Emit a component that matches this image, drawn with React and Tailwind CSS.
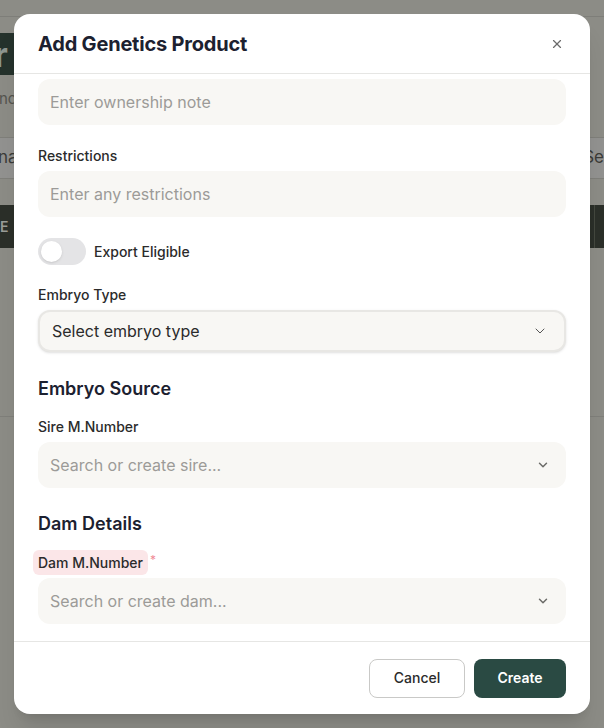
import { ChevronDown, X } from 'lucide-react';

const font = { fontFamily: 'Inter, "Noto Sans", sans-serif' };

const Label = ({ children }) => (
  <div className="mb-[5px] text-sm font-medium leading-5 text-[#2b2b2b]">{children}</div>
);

const TextInput = ({ placeholder }) => (
  <input
    type="text"
    placeholder={placeholder}
    className="h-[46px] w-full rounded-xl bg-[#f8f7f4] px-3 text-base text-[#2b2b2b] outline-none placeholder:text-[#9c9b98]"
  />
);

const Combo = ({ placeholder }) => (
  <div className="flex h-[46px] w-full items-center justify-between rounded-xl bg-[#f8f7f4] pl-3 pr-[16px]">
    <span className="text-base text-[#9c9b98]">{placeholder}</span>
    <ChevronDown className="h-[14px] w-[14px] text-[#6b6b68]" strokeWidth={2.5} />
  </div>
);

const Toggle = ({ label }) => (
  <div className="flex items-center gap-2">
    <button className="flex h-[27px] w-12 items-center rounded-full bg-[#e4e4e6] px-[3px]">
      <span className="h-[21px] w-[21px] rounded-full bg-white shadow-sm" />
    </button>
    <span className="text-sm font-medium text-[#2b2b2b]">{label}</span>
  </div>
);

// page behind the dialog, dimmed by the backdrop
const Backdrop = () => (
  <div className="flex h-full flex-col bg-[#8c8c86] text-[#4a4a46]">
    <div className="h-[17px] border-b border-[#7e7e79]" />
    <div className="mt-[16px] flex h-[42px] w-[15px] items-center overflow-hidden bg-[#25322c]">
      <span className="-ml-[6px] text-[34px] font-bold text-[#8d9590]">r</span>
    </div>
    <div className="mt-[14px] -ml-[1px] text-[15px] leading-5 text-[#55554f]">nc</div>
    <div className="mt-[28px] flex h-[42px] items-center justify-between border-y border-[#7f7f7a] bg-[#929290] text-[17px] text-[#3b3b38]">
      <span className="-ml-[2px]">na</span>
      <span>Se</span>
    </div>
    <div className="mt-[26px] flex h-[43px] items-center justify-between bg-[#2b2f29]">
      <span className="text-sm font-semibold text-[#9a9d98]">E</span>
      <span className="mr-[9px] h-full w-px bg-[#44483f]" />
    </div>
    <div className="mt-[168px] border-b border-[#7f7f7a]" />
  </div>
);

export default function App() {
  return (
    <div className="relative h-[728px] w-[604px] overflow-hidden" style={font}>
      <Backdrop />

      <div className="absolute left-[14px] top-[14px] flex h-[700px] w-[576px] flex-col overflow-hidden rounded-2xl bg-white shadow-xl">
        <div className="flex h-[60px] shrink-0 items-center justify-between border-b border-[#e6e6e4] px-6">
          <h2 className="text-[20px] font-bold tracking-[-0.2px] text-[#1c2130]">Add Genetics Product</h2>
          <X className="mr-[2px] h-[14px] w-[14px] text-[#6b6b6b]" strokeWidth={2} />
        </div>

        <div className="flex-1 overflow-hidden px-6 pt-[5px]">
          <TextInput placeholder="Enter ownership note" />

          <div className="mt-[21px]">
            <Label>Restrictions</Label>
            <TextInput placeholder="Enter any restrictions" />
          </div>

          <div className="mt-[21px]">
            <Toggle label="Export Eligible" />
          </div>

          <div className="mt-[20px]">
            <Label>Embryo Type</Label>
            <div className="flex h-[42px] w-full items-center justify-between rounded-xl border-2 border-[#e8e7e4] bg-[#f8f7f4] pl-[12px] pr-[16px] shadow-sm">
              <span className="text-base text-[#2b2b2b]">Select embryo type</span>
              <ChevronDown className="h-[16px] w-[16px] text-[#555]" strokeWidth={1.5} />
            </div>
          </div>

          <h3 className="mt-[23px] text-lg font-semibold leading-7 text-[#1c2130]">Embryo Source</h3>

          <div className="mt-[14px]">
            <Label>Sire M.Number</Label>
            <Combo placeholder="Search or create sire..." />
          </div>

          <h3 className="mt-[22px] text-lg font-semibold leading-7 text-[#1c2130]">Dam Details</h3>

          <div className="mt-[12px]">
            <div className="mb-[3px] flex items-start">
              <span className="-ml-[5px] rounded-md bg-[#fbe6e8] px-[5px] py-[2px] text-sm font-medium leading-[21px] text-[#2b2b2b]">
                Dam M.Number
              </span>
              <span className="ml-[2px] mt-[2px] text-xs text-[#f08a96]">*</span>
            </div>
            <Combo placeholder="Search or create dam..." />
          </div>
        </div>

        <div className="flex h-[73px] shrink-0 items-center justify-end gap-[9px] border-t border-[#e6e6e4] px-6">
          <button className="h-[39px] w-[96px] rounded-lg border border-[#c9c9c7] bg-white text-sm font-medium text-[#2b2b2b]">
            Cancel
          </button>
          <button className="h-[39px] w-[92px] rounded-lg bg-[#2a4a43] text-sm font-semibold text-white">
            Create
          </button>
        </div>
      </div>
    </div>
  );
}
